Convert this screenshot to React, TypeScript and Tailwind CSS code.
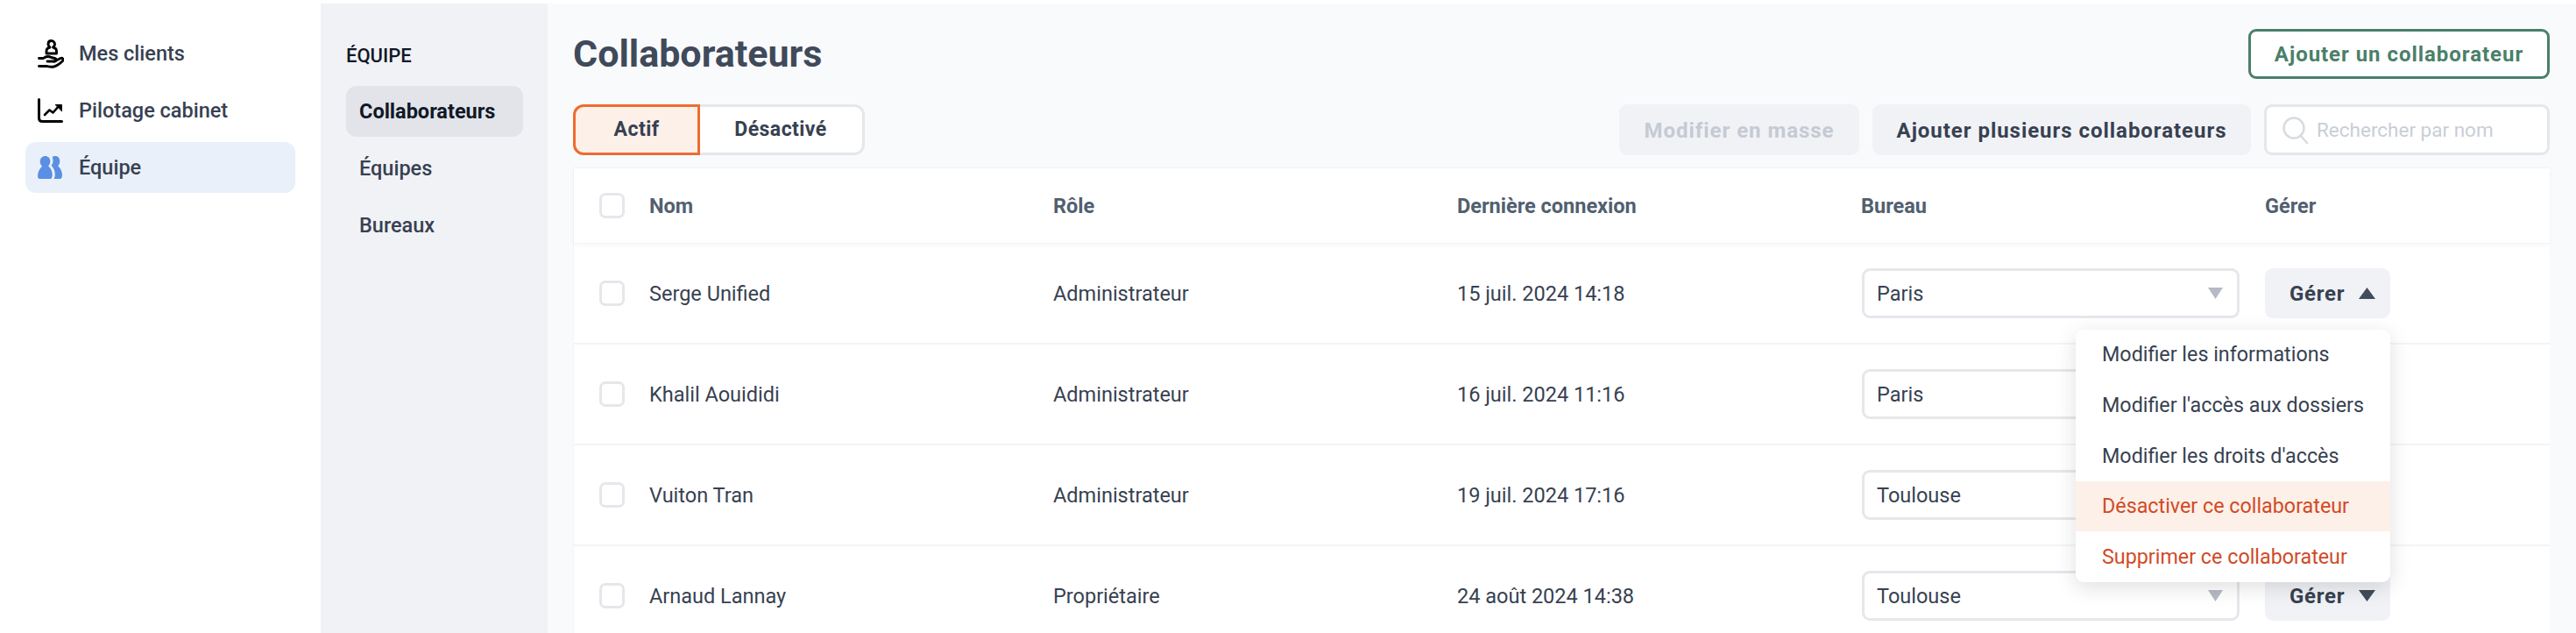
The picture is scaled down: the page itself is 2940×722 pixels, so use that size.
import React from "react";

const HandIcon = () => (
  <svg width="30" height="33" viewBox="0 0 30 33" fill="none" stroke="#000" strokeWidth="2.9" strokeLinecap="round" strokeLinejoin="round">
    <path d="M15.500 1.500c2.500 0 4 1.800 4 4 0 1.700-1 2.800-2 3.500 2.500.5 4 2.300 4 4.500v2.500H10v-2.500c0-2.200 1.500-4 4-4.500-1-.7-2-1.800-2-3.500 0-2.200 1-4 3.500-4z" />
    <path d="M1.500 21.500h5c3-2.500 6-2.500 9-1l4 1c2 .5 2 3.500-.5 3.500H11" />
    <path d="M19 25l7-3.500c2.500-1 4 1.500 2.500 3-3 3-6 5.500-10 6.500-3 .6-5.500 0-8-.5H1.500" />
  </svg>
);

const ChartIcon = () => (
  <svg width="29" height="28" viewBox="0 0 29 28" fill="none" stroke="#000" strokeWidth="3" strokeLinecap="round" strokeLinejoin="round">
    <path d="M1.500 1.500v21c0 2.500 1.500 4 4 4h22" />
    <path d="M8 19l5.500-5.500 4 3 7-8" strokeWidth="2.6" />
    <path d="M20.500 7.500h7v7z" fill="#000" strokeWidth="1" />
  </svg>
);

const UsersIcon = () => (
  <svg width="28" height="26" viewBox="0 0 36 33" preserveAspectRatio="none" fill="#5b8fe3">
    <path d="M11 0c4 0 7.500 3 7.500 7.500 0 3-1.500 5.500-3 7 3.500 2.500 6 7 6 12.500 0 3-.8 6-2.500 6H3c-2 0-3-1.500-3-4 0-5 2.500-10.500 6.500-14-1.500-1.500-3-4-3-7C3.500 3 7 0 11 0z" />
    <path d="M26 0c4 0 6.500 3 6.500 7.500 0 3-1.300 5.500-2.800 7 3.500 2.500 6.300 7.500 6.300 13.500 0 2.500-1 5-3 5h-9c1-2 1.500-4 1.500-6 0-5-2-10-5.500-13 1.500-2 2.500-4.500 2.500-7 0-2-.5-4-1-5C22 .5 24 0 26 0z" />
  </svg>
);

const SearchIcon = () => (
  <svg width="31" height="31" viewBox="0 0 31 31" fill="none" stroke="#d7dbe1" strokeWidth="2.4" strokeLinecap="round">
    <circle cx="14" cy="13" r="11.500" />
    <path d="M22 22l7 8" />
  </svg>
);

const Triangle = ({ up = false, color, w = 19 }: { up?: boolean; color: string; w?: number }) => (
  <svg width={w} height="13" viewBox="0 0 18 13" preserveAspectRatio="none" fill={color}>
    {up ? <path d="M9 0l9 13H0z" /> : <path d="M0 0h18L9 13z" />}
  </svg>
);

const Checkbox = () => (
  <span className="block w-[29px] h-[29px] rounded-[7px] border-[3px] border-[#e5e7eb] bg-white shrink-0" />
);

const users = [
  { name: "Serge Unified", role: "Administrateur", date: "15 juil. 2024 14:18", office: "Paris", open: true, hidden: false },
  { name: "Khalil Aouididi", role: "Administrateur", date: "16 juil. 2024 11:16", office: "Paris", open: false, hidden: true },
  { name: "Vuiton Tran", role: "Administrateur", date: "19 juil. 2024 17:16", office: "Toulouse", open: false, hidden: true },
  { name: "Arnaud Lannay", role: "Propriétaire", date: "24 août 2024 14:38", office: "Toulouse", open: false, hidden: false },
];

const menu = [
  { label: "Modifier les informations", cls: "text-[#374151]" },
  { label: "Modifier l'accès aux dossiers", cls: "text-[#374151]" },
  { label: "Modifier les droits d'accès", cls: "text-[#374151]" },
  { label: "Désactiver ce collaborateur", cls: "text-[#d14a26] bg-[#fdf0e8]" },
  { label: "Supprimer ce collaborateur", cls: "text-[#d14a26]" },
];

export default function App() {
  return (
    <div className="h-[722px] w-[2940px] overflow-hidden bg-white flex font-['Roboto',sans-serif] text-[#374151]">
      <aside className="w-[366px] shrink-0 pt-[32px] px-[29px] flex flex-col gap-[7px]">
        {[
          { label: "Mes clients", icon: <HandIcon />, active: false },
          { label: "Pilotage cabinet", icon: <ChartIcon />, active: false },
          { label: "Équipe", icon: <UsersIcon />, active: true },
        ].map((n) => (
          <div
            key={n.label}
            className={`h-[58px] rounded-[12px] pl-[14px] flex items-center gap-[11px] text-[23.5px] font-medium ${n.active ? "bg-[#eaf0fa]" : ""}`}
          >
            <span className="w-[36px] h-[36px] flex items-center justify-start">{n.icon}</span>
            <span className="pt-[2px]">{n.label}</span>
          </div>
        ))}
      </aside>

      <div className="flex flex-1 mt-[4px]">
        <nav className="w-[259px] shrink-0 bg-[#f1f2f6] pl-[29px] pr-[28px] pt-[47px]">
          <div className="text-[22px] font-medium text-[#111827] h-[26px] leading-[26px] mb-[21px]">ÉQUIPE</div>
          <div className="flex flex-col gap-[7px] text-[23.5px] font-medium">
            <div className="h-[58px] rounded-[12px] bg-[#e2e4e9] pl-[15px] pt-[2px] flex items-center text-[#111827] font-bold">Collaborateurs</div>
            <div className="h-[58px] rounded-[12px] pl-[15px] pt-[2px] flex items-center">Équipes</div>
            <div className="h-[58px] rounded-[12px] pl-[15px] pt-[2px] flex items-center">Bureaux</div>
          </div>
        </nav>

        <main className="flex-1 bg-[#f9fafc] pl-[29px] pr-[30px] pt-[29px] min-w-0">
          <div className="flex items-center justify-between h-[57px]">
            <h1 className="text-[43px] font-bold text-[#3f4a5a] leading-none">Collaborateurs</h1>
            <button className="w-[344px] h-[57px] rounded-[9px] border-[3px] border-[#4b7f6a] text-[#4b7f6a] text-[24px] font-bold tracking-[0.04em] bg-white pt-[1px]">
              Ajouter un collaborateur
            </button>
          </div>

          <div className="flex items-center mt-[29px] h-[58px]">
            <div className="flex h-full text-[23px] font-bold tracking-[0.02em]">
              <div className="w-[145px] rounded-l-[12px] border-[3px] border-[#ee6c2f] bg-[#fdf0e8] flex items-center justify-center z-10 pt-[1px]">Actif</div>
              <div className="w-[189px] -ml-[1px] rounded-r-[12px] border-[3px] border-l-0 border-[#e5e7eb] bg-white flex items-center justify-center pt-[1px]">Désactivé</div>
            </div>
            <div className="ml-auto flex h-full gap-[15px]">
              <button className="w-[274px] rounded-[9px] bg-[#f1f2f6] text-[#c5cad3] text-[24px] font-bold tracking-[0.04em] pt-[2px]">Modifier en masse</button>
              <button className="w-[432px] rounded-[9px] bg-[#f1f2f6] text-[#374151] text-[24px] font-bold tracking-[0.04em] pt-[2px]">Ajouter plusieurs collaborateurs</button>
              <div className="w-[326px] rounded-[9px] border-[3px] border-[#e5e7eb] bg-white flex items-center pl-[17px] gap-[9px] text-[22.5px] text-[#c9ced6]">
                <SearchIcon />
                <span className="pt-[1px]">Rechercher par nom</span>
              </div>
            </div>
          </div>

          <div className="relative mt-[14px] bg-white border-l border-t border-[#f3f4f6]">
            <div className="h-[86px] flex items-center pl-[29px] shadow-[0_2px_6px_rgba(0,0,0,0.04)] border-b border-[#f3f4f6] text-[23.5px] font-bold text-[#525f70]">
              <Checkbox />
              <div className="ml-[28px] flex-1 grid grid-cols-[461px_461px_461px_461px_1fr] pt-[2px]">
                <span>Nom</span>
                <span>Rôle</span>
                <span>Dernière connexion</span>
                <span>Bureau</span>
                <span>Gérer</span>
              </div>
            </div>
            {users.map((u) => (
              <div key={u.name} className="h-[115px] flex items-center pl-[29px] border-b-[2px] border-[#f3f4f6] text-[23.5px]">
                <Checkbox />
                <div className="ml-[28px] flex-1 grid grid-cols-[461px_461px_461px_461px_1fr] items-center">
                  <span className="pt-[2px]">{u.name}</span>
                  <span className="pt-[2px]">{u.role}</span>
                  <span className="pt-[2px]">{u.date}</span>
                  <div className="ml-[1px] w-[431px] h-[57px] rounded-[9px] border-[3px] border-[#e5e7eb] bg-white flex items-center justify-between pl-[14px] pr-[16px]">
                    <span className="pt-[2px]">{u.office}</span>
                    <Triangle color="#b5bac3" w={17} />
                  </div>
                  <button className={`w-[143px] h-[57px] rounded-[9px] bg-[#f1f2f6] flex items-center pl-[28px] gap-[16px] text-[24px] font-bold tracking-[0.03em] ${u.hidden ? "invisible" : ""}`}>
                    <span className="pt-[1px]">Gérer</span>
                    <Triangle up={u.open} color="#414c5c" />
                  </button>
                </div>
              </div>
            ))}
            <div className="absolute left-[1714px] top-[184px] w-[359px] h-[288px] rounded-[9px] bg-white overflow-hidden shadow-[0_6px_24px_rgba(0,0,0,0.13)] text-[23.3px] flex flex-col">
              {menu.map((m) => (
                <div key={m.label} className={`flex-1 flex items-center pl-[30px] ${m.cls}`}>{m.label}</div>
              ))}
            </div>
          </div>
        </main>
      </div>
    </div>
  );
}
